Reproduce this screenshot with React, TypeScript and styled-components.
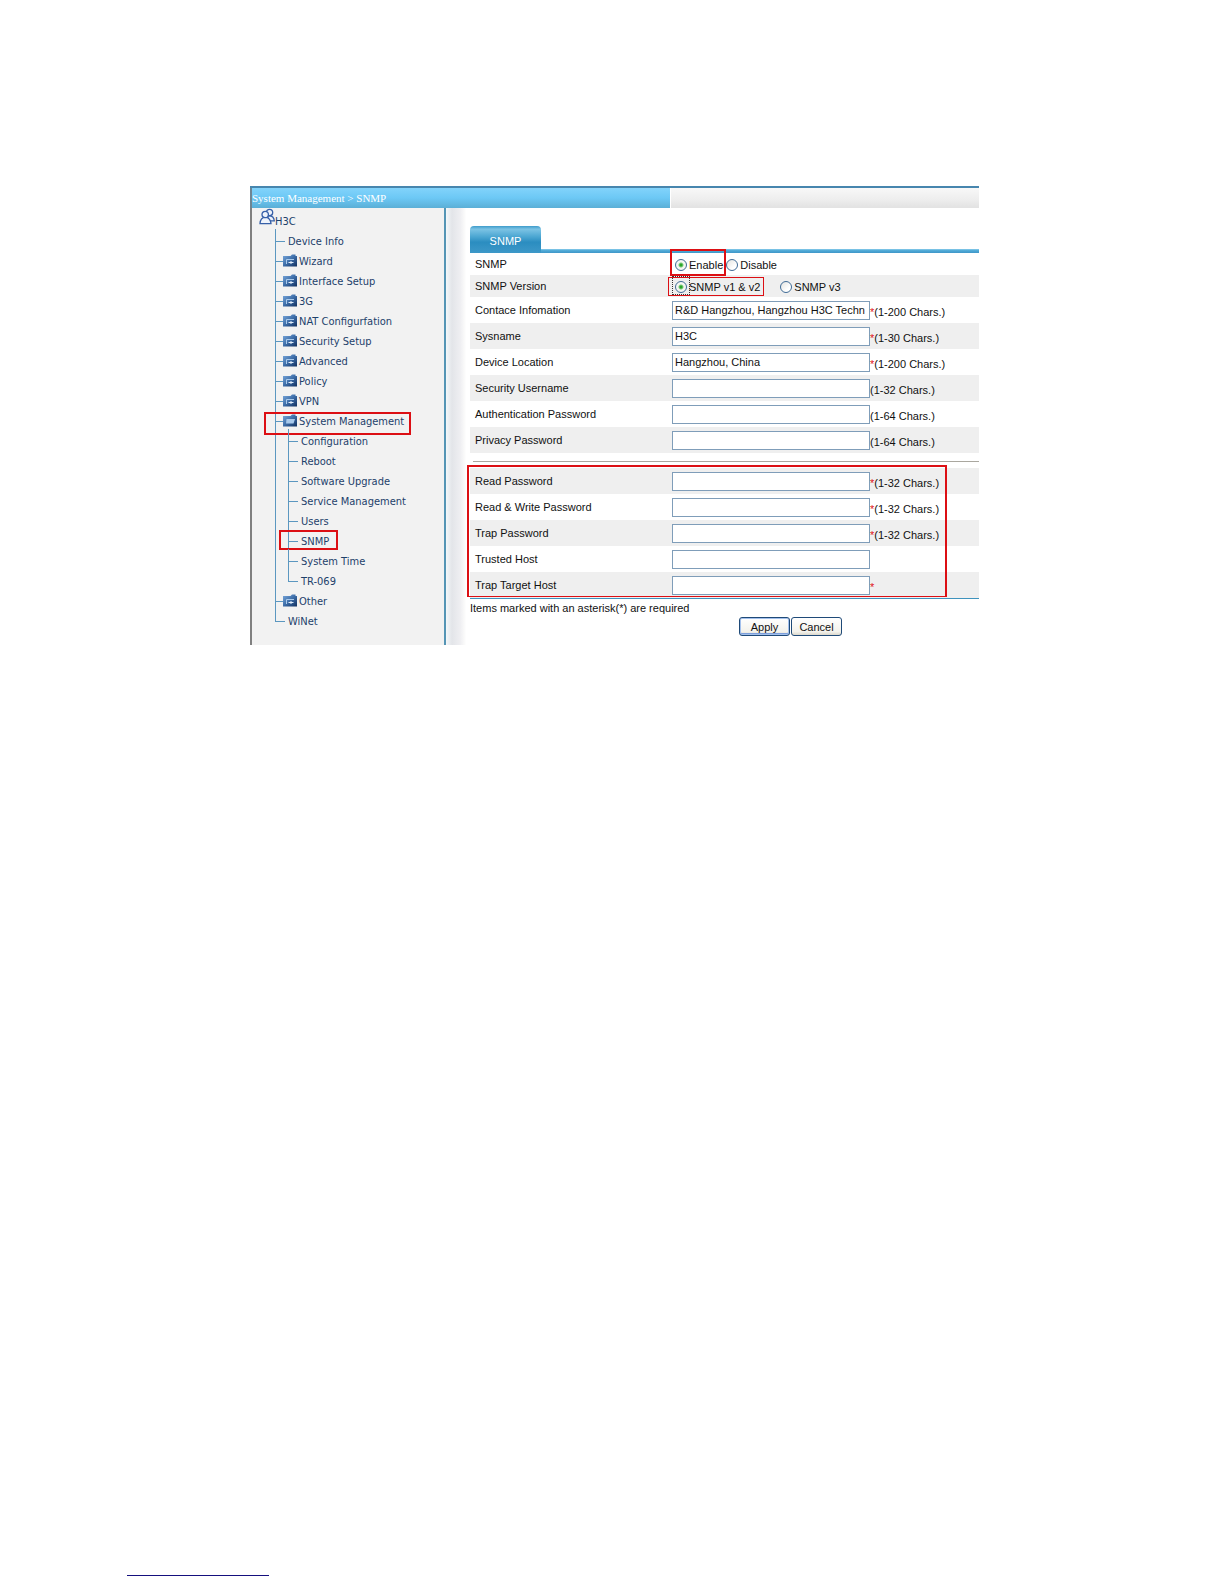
import React, { useState } from "react";
import styled, { createGlobalStyle, css } from "styled-components";

const GlobalStyle = createGlobalStyle`
  *, *::before, *::after { box-sizing: border-box; }
  body {
    margin: 0;
    background: #fff;
    color: #111;
    font: 11px/20px "Liberation Sans", Arial, sans-serif;
  }
`;

const RED = "#dc0f14";
const LINE = "#5b97c0";

const Page = styled.div`
  display: flex;
  flex-direction: column;
  justify-content: space-between;
  min-height: 100vh;
  padding: 186px 245px 8px 250px;
`;

const Console = styled.div`
  border-top: 2px solid #4786ae;
`;

const TopBar = styled.header`
  display: flex;
  height: 20px;
  border-left: 2px solid #6f8592;
`;

const Crumbs = styled.nav`
  flex: 0 0 418px;
  background: linear-gradient(#82d3fb, #6cc8f5 50%, #5bafd6);
  color: #fff;
  font: 11px/20px "Liberation Serif", "Times New Roman", serif;
`;

const TopFill = styled.div`
  flex: 1;
  margin-left: 1px;
  background: linear-gradient(#f8f8f8, #ededed 60%, #e2e2e2);
`;

const Body = styled.div`
  display: flex;
`;

const Sidebar = styled.nav`
  flex: 0 0 196px;
  padding: 4px 0 13px;
  border-left: 2px solid #808080;
  border-right: 2px solid #5595b5;
  background: #f2f2f2;
  color: #1d416b;
  font-family: "DejaVu Sans Condensed", "Liberation Sans", sans-serif;

  a {
    color: inherit;
    text-decoration: none;
    white-space: nowrap;
  }
`;

const Root = styled.div`
  display: flex;
  height: 20px;
  padding-left: 7px;

  svg {
    flex: none;
    margin-top: -4px;
  }
`;

const List = styled.ul<{ $nested?: boolean }>`
  margin: 0 0 0 ${(p) => (p.$nested ? 13 : 23)}px;
  padding: 0;
  list-style: none;
`;

const Item = styled.li`
  position: relative;

  &::before {
    content: "";
    position: absolute;
    top: -3px;
    bottom: 0;
    left: 0;
    border-left: 1px solid ${LINE};
  }
  &:last-child::before {
    bottom: auto;
    height: 12px;
  }
`;

const mark = css`
  &::after {
    content: "";
    position: absolute;
    border: 2px solid ${RED};
    pointer-events: none;
  }
`;

const Entry = styled.div<{ $marked?: "folder" | "leaf" }>`
  display: flex;
  position: relative;
  height: 20px;

  &::before {
    content: "";
    flex: none;
    width: 10px;
    height: 10px;
    margin-right: 3px;
    border-bottom: 1px solid ${LINE};
  }
  &:has(svg)::before {
    width: 8px;
    margin-right: 0;
  }
  svg {
    flex: none;
    margin: 2px 2px 0 0;
  }
  ${(p) => p.$marked && mark}
  &::after {
    ${(p) =>
      p.$marked === "folder"
        ? "left: -11px; top: 0; width: 147px; height: 23px;"
        : "left: -9px; top: -2px; width: 59px; height: 20px;"}
  }
`;

const Shade = styled.div`
  flex: 0 0 24px;
  background: linear-gradient(90deg, #f4f8fa, #e3e5e9 25%, #efeff2 60%, #f9f9f9 75%, #fff 85%);
`;

const Content = styled.main`
  flex: 1;
  min-width: 0;
  padding-top: 18px;
`;

const TabBar = styled.div`
  display: flex;
  height: 27px;
  background: linear-gradient(#8ccdec, #4fa9d6 40%, #3f97c8) bottom / 100% 4px no-repeat;
`;

const Tab = styled.button`
  width: 71px;
  padding: 3px 0 0;
  border: 0;
  border-radius: 4px 4px 0 0;
  background: linear-gradient(#3f9ccb, #7cc3e4 12%, #4ba6d2 40%, #2b8dc0 60%, #3d98c8);
  color: #fff;
  font: inherit;
`;

const Row = styled.div<{ $shaded?: boolean; $short?: boolean }>`
  display: grid;
  grid-template-columns: 202px 1fr;
  align-items: center;
  height: ${(p) => (p.$short ? 22 : 26)}px;
  background: ${(p) => (p.$shaded ? "#efefef" : "#fff")};
`;

const Caption = styled.label`
  padding-left: 5px;
`;

const Control = styled.div`
  display: flex;
  align-items: center;
`;

const TextBox = styled.input`
  width: 198px;
  height: 19px;
  padding: 0 2px;
  border: 1px solid #7f9db9;
  background: #fff;
  color: #111;
  font: inherit;
  outline: 0;
`;

const Hint = styled.span`
  padding-top: 3px;
  white-space: nowrap;

  b {
    color: #e01020;
    font-weight: 400;
  }
`;

const Choice = styled.label<{ $mark?: "thick" | "thin"; $gap?: number; $focused?: boolean }>`
  display: flex;
  align-items: center;
  gap: 2px;
  position: relative;
  margin-left: ${(p) => p.$gap ?? 3}px;
  padding-top: 2px;
  line-height: 18px;
  white-space: nowrap;

  ${(p) => p.$mark && mark}
  &::after {
    border-width: ${(p) => (p.$mark === "thick" ? 2 : 1)}px;
    inset: ${(p) => (p.$mark === "thick" ? "-5px -3px -2px -5px" : "1px -4px 0 -7px")};
    outline: ${(p) => (p.$mark === "thin" ? `1px solid ${RED}88` : "none")};
    outline-offset: -1px;
  }
  ${(p) =>
    p.$focused &&
    css`
      &::before {
        content: "";
        position: absolute;
        inset: 0 auto 1px -3px;
        width: 18px;
        border: 1px dotted #333;
      }
    `}
`;

const Radio = styled.input`
  appearance: none;
  flex: none;
  width: 12px;
  height: 12px;
  margin: 0;
  border: 1px solid #3f6b96;
  border-radius: 50%;
  background: linear-gradient(135deg, #e4e4e0, #fff 70%);

  &:checked {
    background: radial-gradient(circle, #2ba52b 0 1px, #7fcd7f 2px, #f4f6f2 3px);
  }
`;

const Divider = styled.hr`
  height: 1px;
  margin: 8px 0 6px 3px;
  border: 0;
  background: #aaa79f;
`;

const Passwords = styled.section`
  position: relative;
  border-bottom: 1px solid #3f93bd;

  ${mark}
  &::after {
    inset: -3px 32px 1px -3px;
    border-width: 2px 2px 1px 2px;
  }
`;

const Note = styled.p`
  margin: 0;
  line-height: 18px;
`;

const Actions = styled.div`
  display: flex;
  gap: 1px;
  padding-left: 269px;
`;

const Button = styled.button<{ $primary?: boolean }>`
  width: 51px;
  height: 19px;
  padding: 1px 0 0;
  border: 1px solid #1f4a78;
  border-radius: 3px;
  background: linear-gradient(#fff, #f3f2ec 80%, #dcd8cc);
  box-shadow: ${(p) => (p.$primary ? "inset 0 0 0 1px #a3c0ec, inset 0 -2px 0 #7d9fdb" : "none")};
  color: #111;
  font: inherit;
  line-height: 16px;
`;

const FootRule = styled.hr`
  width: 142px;
  height: 1px;
  margin: 0 0 0 -123px;
  border: 0;
  background: #15107e;
`;

const PeopleIcon = () => (
  <svg width="16" height="17" viewBox="0 0 16 17" fill="#eef3fb" stroke="#3760a8" strokeWidth="1.3" aria-hidden="true">
    <path d="M9 8c3.500-.3 6 1.500 6.300 4.800H9z" />
    <circle cx="10.500" cy="4.500" r="3.200" />
    <path d="M1 15.600C1.200 11.800 3 9.300 6.300 9.300s5.300 2.500 5.700 6.300z" />
    <circle cx="6.200" cy="6.500" r="3.200" />
  </svg>
);

const FolderIcon = ({ open }: { open?: boolean }) => (
  <svg width="14" height="13" viewBox="0 0 14 13" aria-hidden="true">
    <defs>
      <linearGradient id="folder" x1="0" y1="0" x2="1" y2="1">
        <stop offset="0" stopColor="#7ba9dc" />
        <stop offset=".5" stopColor="#3d6da8" />
        <stop offset="1" stopColor="#12305f" />
      </linearGradient>
    </defs>
    <path d="M0 2h7.500L9 .5h3.500V2H14v10.500H0z" fill="url(#folder)" />
    {open ? (
      <path d="M3.500 5H12L10.500 9.500H3z" fill="#a9caec" />
    ) : (
      <g fill="none">
        <path d="M3.500 10V5.500h7.500" stroke="#a9caec" />
        <path d="M5.500 8.500h5M8 7v3" stroke="#e3effb" />
      </g>
    )}
  </svg>
);

type Node = { name: string; leaf?: boolean; children?: string[] };

const tree: Node[] = [
  { name: "Device Info", leaf: true },
  { name: "Wizard" },
  { name: "Interface Setup" },
  { name: "3G" },
  { name: "NAT Configurfation" },
  { name: "Security Setup" },
  { name: "Advanced" },
  { name: "Policy" },
  { name: "VPN" },
  {
    name: "System Management",
    children: [
      "Configuration",
      "Reboot",
      "Software Upgrade",
      "Service Management",
      "Users",
      "SNMP",
      "System Time",
      "TR-069",
    ],
  },
  { name: "Other" },
  { name: "WiNet", leaf: true },
];

type Field = { label: string; value?: string; required?: boolean; hint?: string; secret?: boolean };

const general: Field[] = [
  { label: "Contace Infomation", value: "R&D Hangzhou, Hangzhou H3C Techn", required: true, hint: "(1-200 Chars.)" },
  { label: "Sysname", value: "H3C", required: true, hint: "(1-30 Chars.)" },
  { label: "Device Location", value: "Hangzhou, China", required: true, hint: "(1-200 Chars.)" },
  { label: "Security Username", hint: "(1-32 Chars.)" },
  { label: "Authentication Password", hint: "(1-64 Chars.)", secret: true },
  { label: "Privacy Password", hint: "(1-64 Chars.)", secret: true },
];

const access: Field[] = [
  { label: "Read Password", required: true, hint: "(1-32 Chars.)", secret: true },
  { label: "Read & Write Password", required: true, hint: "(1-32 Chars.)", secret: true },
  { label: "Trap Password", required: true, hint: "(1-32 Chars.)", secret: true },
  { label: "Trusted Host" },
  { label: "Trap Target Host", required: true },
];

const FieldRow = ({ field, shaded }: { field: Field; shaded: boolean }) => {
  const id = field.label.toLowerCase().replace(/[^a-z]+/g, "-");
  return (
    <Row $shaded={shaded}>
      <Caption htmlFor={id}>{field.label}</Caption>
      <Control>
        <TextBox id={id} type={field.secret ? "password" : "text"} defaultValue={field.value} />
        <Hint>
          {field.required && <b>*</b>}
          {field.hint}
        </Hint>
      </Control>
    </Row>
  );
};

export default function App() {
  const [enabled, setEnabled] = useState(true);
  const [version, setVersion] = useState("v1v2");

  return (
    <Page>
      <GlobalStyle />
      <Console>
        <TopBar>
          <Crumbs>System Management &gt; SNMP</Crumbs>
          <TopFill />
        </TopBar>
        <Body>
          <Sidebar>
            <Root>
              <PeopleIcon />
              <a href="#h3c">H3C</a>
            </Root>
            <List>
              {tree.map((node) => (
                <Item key={node.name}>
                  <Entry $marked={node.children ? "folder" : undefined}>
                    {!node.leaf && <FolderIcon open={!!node.children} />}
                    <a href="#menu">{node.name}</a>
                  </Entry>
                  {node.children && (
                    <List $nested>
                      {node.children.map((name) => (
                        <Item key={name}>
                          <Entry $marked={name === "SNMP" ? "leaf" : undefined}>
                            <a href="#page">{name}</a>
                          </Entry>
                        </Item>
                      ))}
                    </List>
                  )}
                </Item>
              ))}
            </List>
          </Sidebar>
          <Shade />
          <Content>
            <TabBar>
              <Tab type="button">SNMP</Tab>
            </TabBar>
            <form onSubmit={(e) => e.preventDefault()}>
              <Row $short role="radiogroup" aria-label="SNMP">
                <Caption as="span">SNMP</Caption>
                <Control>
                  <Choice $mark="thick">
                    <Radio type="radio" name="snmp" checked={enabled} onChange={() => setEnabled(true)} />
                    Enable
                  </Choice>
                  <Choice>
                    <Radio type="radio" name="snmp" checked={!enabled} onChange={() => setEnabled(false)} />
                    Disable
                  </Choice>
                </Control>
              </Row>
              <Row $short $shaded role="radiogroup" aria-label="SNMP Version">
                <Caption as="span">SNMP Version</Caption>
                <Control>
                  <Choice $mark="thin" $focused>
                    <Radio
                      type="radio"
                      name="version"
                      checked={version === "v1v2"}
                      onChange={() => setVersion("v1v2")}
                    />
                    SNMP v1 &amp; v2
                  </Choice>
                  <Choice $gap={20}>
                    <Radio
                      type="radio"
                      name="version"
                      checked={version === "v3"}
                      onChange={() => setVersion("v3")}
                    />
                    SNMP v3
                  </Choice>
                </Control>
              </Row>
              {general.map((field, i) => (
                <FieldRow key={field.label} field={field} shaded={i % 2 === 1} />
              ))}
              <Divider />
              <Passwords>
                {access.map((field, i) => (
                  <FieldRow key={field.label} field={field} shaded={i % 2 === 0} />
                ))}
              </Passwords>
              <Note>Items marked with an asterisk(*) are required</Note>
              <Actions>
                <Button type="submit" $primary>
                  Apply
                </Button>
                <Button type="reset">Cancel</Button>
              </Actions>
            </form>
          </Content>
        </Body>
      </Console>
      <FootRule />
    </Page>
  );
}
